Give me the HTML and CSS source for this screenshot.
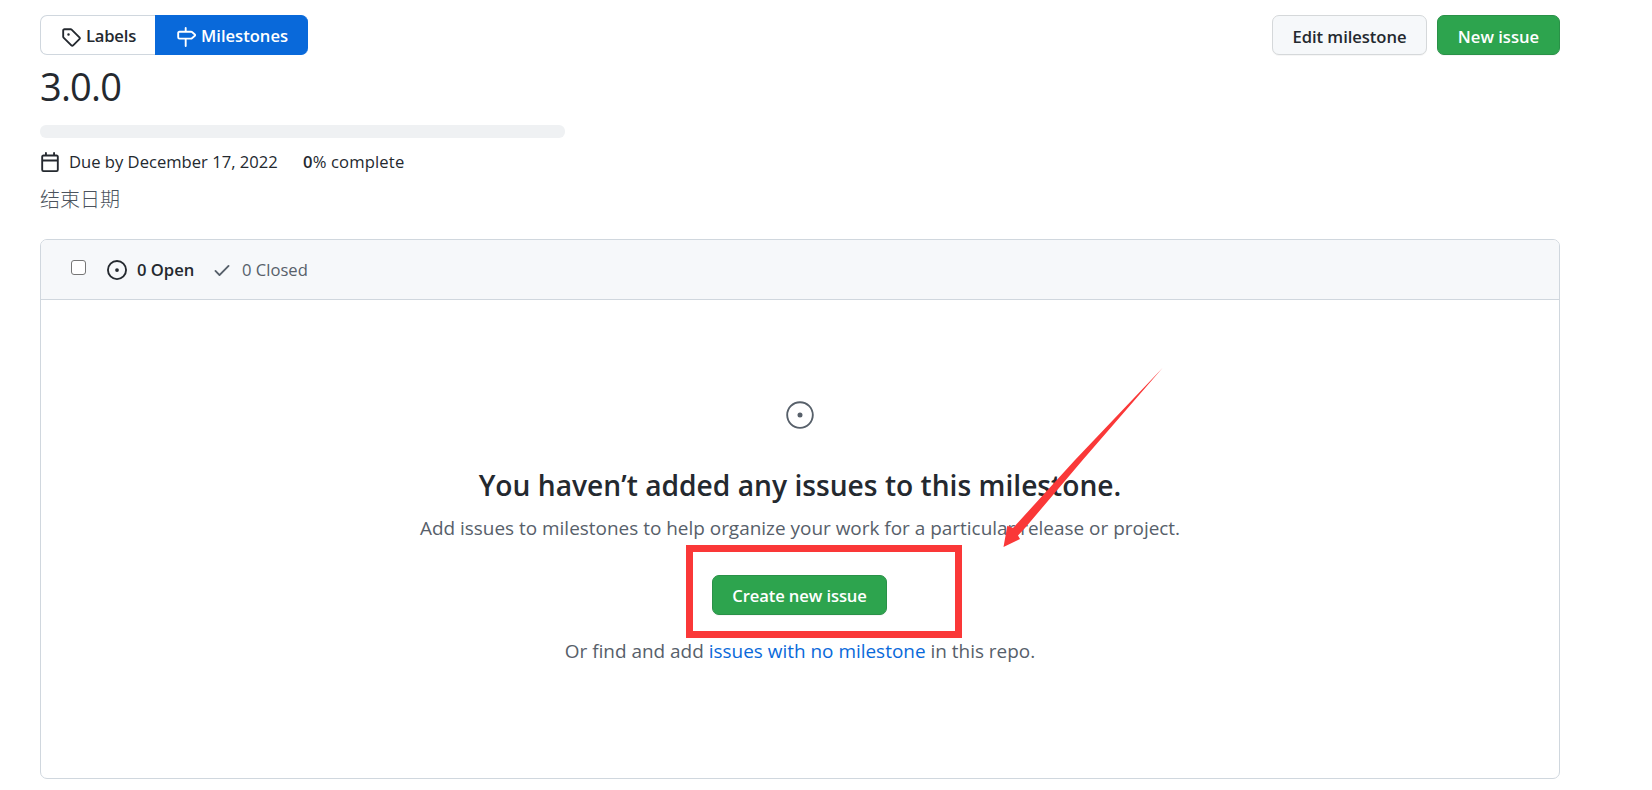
FILE: index.html
```
<!DOCTYPE html>
<html lang="en">
<head>
<meta charset="utf-8">
<title>3.0.0 Milestone</title>
<link rel="stylesheet" href="styles.css">
</head>
<body>
<main class="page">
  <header class="toolbar">
    <nav class="subnav">
      <a class="subnav-item"><svg class="icon" viewBox="0 0 16 16"><path d="M2.5 7.775V2.75a.25.25 0 01.25-.25h5.025a.25.25 0 01.177.073l6.25 6.25a.25.25 0 010 .354l-5.025 5.025a.25.25 0 01-.354 0l-6.25-6.25a.25.25 0 01-.073-.177zm-1.5 0V2.75C1 1.784 1.784 1 2.75 1h5.025c.464 0 .91.184 1.238.513l6.25 6.25a1.75 1.75 0 010 2.474l-5.026 5.026a1.75 1.75 0 01-2.474 0l-6.25-6.25A1.75 1.75 0 011 7.775zM6 5a1 1 0 100 2 1 1 0 000-2z" fill-rule="evenodd"/></svg><span class="subnav-text">Labels</span></a>
      <a class="subnav-item selected"><svg class="icon" viewBox="0 0 16 16"><path d="M7.75 0a.75.75 0 01.75.75V3h3.634c.414 0 .814.147 1.13.414l2.07 1.75a1.75 1.75 0 010 2.672l-2.07 1.75a1.75 1.75 0 01-1.13.414H8.5v5.25a.75.75 0 11-1.5 0V10H2.75A1.75 1.75 0 011 8.25v-3.5C1 3.784 1.784 3 2.75 3H7V.75A.75.75 0 017.75 0zm0 8.5h4.384a.25.25 0 00.161-.06l2.07-1.75a.25.25 0 000-.38l-2.07-1.75a.25.25 0 00-.161-.06H2.75a.25.25 0 00-.25.25v3.5c0 .138.112.25.25.25h5z" fill-rule="evenodd"/></svg><span class="subnav-text">Milestones</span></a>
    </nav>
    <div class="actions">
      <a class="btn btn-edit">Edit milestone</a>
      <a class="btn btn-primary btn-new">New issue</a>
    </div>
  </header>
  <h1 class="title">3.0.0</h1>
  <div class="progress"></div>
  <div class="meta">
    <svg class="icon" viewBox="0 0 16 16"><path d="M4.75 0a.75.75 0 01.75.75V2h5V.75a.75.75 0 011.5 0V2h1.25c.966 0 1.75.784 1.75 1.75v10.5A1.75 1.75 0 0113.25 16H2.75A1.75 1.75 0 011 14.25V3.75C1 2.784 1.784 2 2.75 2H4V.75A.75.75 0 014.75 0zm0 3.5h8.5a.25.25 0 01.25.25V6h-11V3.75a.25.25 0 01.25-.25h2zm-2.25 4v6.75c0 .138.112.25.25.25h10.5a.25.25 0 00.25-.25V7.5h-11z" fill-rule="evenodd"/></svg>
    <span class="due">Due by December 17, 2022</span>
    <span class="done"><b>0</b>% complete</span>
  </div>
  <p class="description">结束日期</p>
  <section class="box">
    <div class="box-header">
      <span class="checkbox"></span>
      <a class="state state-open"><svg class="icon" viewBox="0 0 16 16"><path d="M8 9.5a1.5 1.5 0 100-3 1.5 1.5 0 000 3z"/><path d="M8 0a8 8 0 100 16A8 8 0 008 0zM1.5 8a6.5 6.5 0 1113 0 6.5 6.5 0 01-13 0z" fill-rule="evenodd"/></svg><span>0 Open</span></a>
      <a class="state state-closed"><svg class="icon" viewBox="0 0 16 16"><path d="M13.78 4.22a.75.75 0 010 1.06l-7.25 7.25a.75.75 0 01-1.06 0L2.22 9.28a.75.75 0 011.06-1.06L6 10.94l6.72-6.72a.75.75 0 011.06 0z" fill-rule="evenodd"/></svg><span>0 Closed</span></a>
    </div>
    <div class="blankslate">
      <svg class="icon-large" viewBox="0 0 24 24"><path d="M2.5 12a9.5 9.5 0 1119 0 9.5 9.5 0 01-19 0zM12 1C5.925 1 1 5.925 1 12s4.925 11 11 11 11-4.925 11-11S18.075 1 12 1zm0 13a2 2 0 100-4 2 2 0 000 4z" fill-rule="evenodd"/></svg>
      <h3 class="heading">You haven’t added any issues to this milestone.</h3>
      <p class="hint">Add issues to milestones to help organize your work for a particular release or project.</p>
      <a class="btn btn-primary btn-create">Create new issue</a>
      <p class="find">Or find and add <a class="link">issues with no milestone</a> in this repo.</p>
    </div>
  </section>
</main>
<div class="highlight"></div>
<svg class="arrow" viewBox="0 0 172 190"><path d="M167.500 8L80 100L18 168L12.300 165.700L8.500 187L25 179L23 175.500L30 168L87.700 100Z"/></svg>
</body>
</html>
```
FILE: styles.css
```
* { box-sizing: border-box; }
body {
  margin: 0;
  background: #fff;
  color: #24292f;
  font: 16.6px/26px "Open Sans", "Noto Sans", "Noto Sans CJK SC", sans-serif;
}
h1, h3, p { margin: 0; }
.page { width: 1520px; margin-left: 40px; padding-top: 15px; }
.icon { width: 20px; height: 20px; fill: currentColor; flex: none; }
.toolbar { display: flex; justify-content: space-between; height: 40px; }
.subnav, .actions { display: flex; }
.actions { gap: 10px; }
.subnav-item {
  display: flex; align-items: center; gap: 5px;
  width: 115px; padding: 4px 0 0 20px;
  border: 1px solid #d0d7de; border-right: 0;
  border-radius: 7px 0 0 7px;
  font-weight: 600; letter-spacing: -0.2px; white-space: nowrap;
}
.subnav-item.selected {
  width: 153px; color: #fff; background: #0969da; border-color: #0969da;
  border-radius: 0 7px 7px 0; letter-spacing: 0;
}
.subnav-text { margin-top: -2px; }
.btn {
  display: flex; align-items: center; justify-content: center;
  height: 40px; padding-top: 3px; border: 1px solid #d5d8da; border-radius: 7px;
  background: #f6f8fa; font-weight: 600; white-space: nowrap;
  box-shadow: 0 1px 0 rgba(27, 31, 36, .04);
}
.btn-primary { color: #fff; background: #2da44e; border-color: #2a9148; }
.btn-edit { width: 155px; letter-spacing: -0.05px; }
.btn-new { width: 123px; }
.title { height: 60px; padding-top: 1px; font-size: 38px; line-height: 60px; font-weight: 400; letter-spacing: -0.8px; }
.progress { width: 525px; height: 13px; margin-top: 10px; border-radius: 6px; background: #eff1f3; }
.meta { display: flex; align-items: center; height: 26px; margin-top: 11px; white-space: nowrap; }
.meta b { font-weight: 600; }
.due { width: 234px; margin-left: 9px; }
.done { letter-spacing: 0.15px; }
.description { height: 30px; margin-top: 9px; color: #4b535d; font: 300 20px/30px "Noto Sans CJK SC", sans-serif; }
.box { height: 540px; margin-top: 25px; border: 1px solid #d0d7de; border-radius: 7px; overflow: hidden; }
.box-header { display: flex; align-items: center; height: 60px; padding-left: 30px; background: #f6f8fa; border-bottom: 1px solid #d0d7de; white-space: nowrap; }
.checkbox { width: 15px; height: 15px; margin: -4px 21px 0 0; background: #fff; border: 1px solid #767676; border-radius: 3px; }
.state { display: flex; align-items: center; gap: 10px; }
.state-open { width: 105px; font-weight: 600; }
.state-closed { color: #57606a; }
.blankslate { display: flex; flex-direction: column; align-items: center; padding-top: 100px; color: #57606a; font-size: 18.95px; line-height: 30px; white-space: nowrap; }
.icon-large { width: 30px; height: 30px; fill: currentColor; }
.heading { margin-top: 33px; font-size: 28.2px; line-height: 45px; font-weight: 600; color: #24292f; }
.hint { margin-top: 5px; }
.btn-create { width: 175px; margin: 32px 1px 0 0; padding-top: 2px; font-size: 16.6px; letter-spacing: -0.1px; }
.find { margin-top: 21px; }
.link { color: #0969da; }
.highlight { position: absolute; left: 686px; top: 545px; width: 276px; height: 93px; border: 7px solid #fa3838; }
.arrow { position: absolute; left: 995px; top: 360px; width: 172px; height: 190px; fill: #fa3838; }
```
